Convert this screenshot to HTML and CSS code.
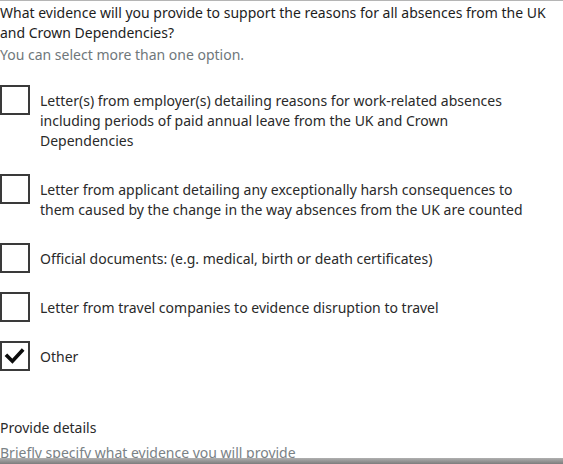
FILE: index.html
```html
<!DOCTYPE html>
<html lang="en">
<head>
<meta charset="utf-8">
<title>Evidence for absences</title>
<link rel="stylesheet" href="styles.css">
</head>
<body>
<div class="page">
  <fieldset class="fieldset">
    <legend class="legend">What evidence will you provide to support the reasons for all absences from the UK and Crown Dependencies?</legend>
    <div class="hint">You can select more than one option.</div>
    <div class="checkboxes">
      <div class="item">
        <span class="box"></span>
        <span class="label">Letter(s) from employer(s) detailing reasons for work-related absences including periods of paid annual leave from the UK and Crown Dependencies</span>
      </div>
      <div class="item">
        <span class="box"></span>
        <span class="label">Letter from applicant detailing any exceptionally harsh consequences to them caused by the change in the way absences from the UK are counted</span>
      </div>
      <div class="item">
        <span class="box"></span>
        <span class="label">Official documents: (e.g. medical, birth or death certificates)</span>
      </div>
      <div class="item">
        <span class="box"></span>
        <span class="label">Letter from travel companies to evidence disruption to travel</span>
      </div>
      <div class="item">
        <span class="box checked"><svg viewBox="0 0 30 30" width="26" height="26"><polyline points="6,15 12,21 23,9" fill="none" stroke="#0b0c0c" stroke-width="4.2" stroke-linecap="square"/></svg></span>
        <span class="label">Other</span>
      </div>
    </div>
  </fieldset>
  <div class="details">
    <div class="details-label">Provide details</div>
    <div class="details-hint">Briefly specify what evidence you will provide</div>
  </div>
</div>
<div class="bottom-bar"></div>
</body>
</html>
```
FILE: styles.css
```css
html, body {
  margin: 0;
  padding: 0;
  background: #ffffff;
  height: 100%;
  overflow: hidden;
}
body {
  font-family: "Noto Sans", "Open Sans", sans-serif;
  color: #0b0c0c;
  font-size: 14px;
  line-height: 20px;
}
.page {
  border-top: 1px solid #b5b5b5;
  padding-top: 2px;
}
.fieldset {
  border: 0;
  margin: 0;
  padding: 0;
}
.legend {
  padding: 0;
  margin: 0;
  color: #1d1d1d;
}
.hint {
  margin-top: 2px;
  color: #6f777b;
}
.checkboxes {
  margin-top: 20px;
  display: flex;
  flex-direction: column;
  gap: 19px;
}
.item {
  display: flex;
  align-items: flex-start;
  gap: 10px;
}
.box {
  flex: 0 0 auto;
  width: 26px;
  height: 26px;
  border: 2px solid #3a3a3a;
  display: flex;
  align-items: center;
  justify-content: center;
}
.label {
  max-width: 490px;
  padding: 6px 0 4px;
  color: #2a2a2a;
}
.details {
  margin-top: 47px;
}
.details-label {
  color: #2a2a2a;
}
.details-hint {
  margin-top: 5px;
  color: #7a8286;
}
.bottom-bar {
  position: fixed;
  left: 0;
  right: 0;
  bottom: 0;
  height: 6px;
  background: linear-gradient(#b0b0b0, #7d7d7d);
}
```
